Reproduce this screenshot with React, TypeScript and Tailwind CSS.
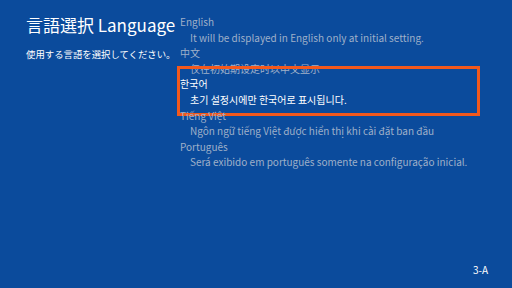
const languages = [
  { name: "English", desc: "It will be displayed in English only at initial setting." },
  { name: "中文", desc: "仅在初始期设定时以中文显示" },
  { name: "한국어", desc: "초기 설정시에만 한국어로 표시됩니다." },
  { name: "Tiếng Việt", desc: "Ngôn ngữ tiếng Việt được hiển thị khi cài đặt ban đầu" },
  { name: "Português", desc: "Será exibido em português somente na configuração inicial." },
];

const selected = 2;

export default function App() {
  return (
    <div
      className="relative w-[512px] h-[288px] bg-[#0b4b9c] overflow-hidden flex"
      style={{ fontFamily: '"Noto Sans CJK JP", "Noto Sans", sans-serif' }}
    >
      {/* Left: title */}
      <div className="w-[180px] shrink-0 pl-[26px] pt-[13px]">
        <h1 className="text-[17px] leading-[24px] text-white whitespace-nowrap">言語選択 Language</h1>
        <p className="mt-[10px] text-[9.4px] leading-[14px] text-white whitespace-nowrap">使用する言語を選択してください。</p>
      </div>

      {/* Right: language list */}
      <div className="flex-1 pt-[14px] text-[10px] leading-[15.6px] whitespace-nowrap">
        {languages.map((lang, i) => (
          <div key={lang.name} className="relative w-[300px]">
            <div className={i === selected ? "text-white" : "text-[#9fb0c9]"}>{lang.name}</div>
            <div className={"pl-[10px] " + (i === selected ? "text-white" : "text-[#9fb0c9]")}>{lang.desc}</div>
            {i === selected && (
              <div className="absolute left-[-3px] right-0 top-[-10px] bottom-[-8px] border-[3px] border-[#f2591d]" />
            )}
          </div>
        ))}
      </div>

      <div className="absolute right-[24px] bottom-[11px] text-[10px] leading-[14px] text-white">3-A</div>
    </div>
  );
}
